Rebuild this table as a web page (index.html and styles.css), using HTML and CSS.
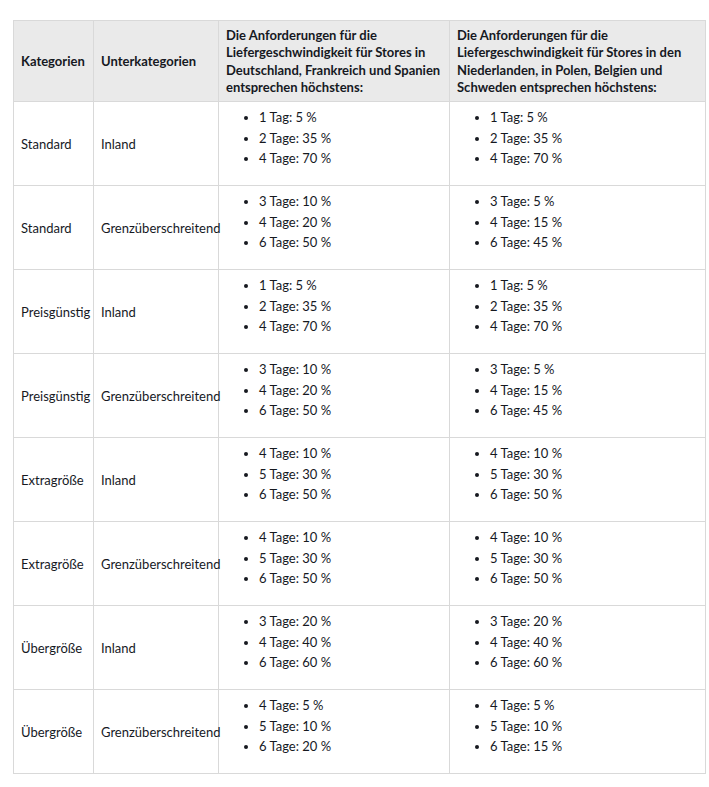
FILE: index.html
```html
<!DOCTYPE html>
<html lang="de">
<head>
<meta charset="utf-8">
<link rel="stylesheet" href="styles.css">
</head>
<body>
<table class="req">
  <colgroup>
    <col class="c1"><col class="c2"><col class="c3"><col class="c4">
  </colgroup>
  <thead>
    <tr>
      <th>Kategorien</th>
      <th>Unterkategorien</th>
      <th>Die Anforderungen für die Liefergeschwindigkeit für Stores in Deutschland, Frankreich und Spanien entsprechen höchstens:</th>
      <th>Die Anforderungen für die Liefergeschwindigkeit für Stores in den Niederlanden, in Polen, Belgien und Schweden entsprechen höchstens:</th>
    </tr>
  </thead>
  <tbody>
    <tr><td>Standard</td><td>Inland</td>
      <td><ul><li>1 Tag: 5 %</li><li>2 Tage: 35 %</li><li>4 Tage: 70 %</li></ul></td>
      <td><ul><li>1 Tag: 5 %</li><li>2 Tage: 35 %</li><li>4 Tage: 70 %</li></ul></td></tr>
    <tr><td>Standard</td><td>Grenzüberschreitend</td>
      <td><ul><li>3 Tage: 10 %</li><li>4 Tage: 20 %</li><li>6 Tage: 50 %</li></ul></td>
      <td><ul><li>3 Tage: 5 %</li><li>4 Tage: 15 %</li><li>6 Tage: 45 %</li></ul></td></tr>
    <tr><td>Preisgünstig</td><td>Inland</td>
      <td><ul><li>1 Tag: 5 %</li><li>2 Tage: 35 %</li><li>4 Tage: 70 %</li></ul></td>
      <td><ul><li>1 Tag: 5 %</li><li>2 Tage: 35 %</li><li>4 Tage: 70 %</li></ul></td></tr>
    <tr><td>Preisgünstig</td><td>Grenzüberschreitend</td>
      <td><ul><li>3 Tage: 10 %</li><li>4 Tage: 20 %</li><li>6 Tage: 50 %</li></ul></td>
      <td><ul><li>3 Tage: 5 %</li><li>4 Tage: 15 %</li><li>6 Tage: 45 %</li></ul></td></tr>
    <tr><td>Extragröße</td><td>Inland</td>
      <td><ul><li>4 Tage: 10 %</li><li>5 Tage: 30 %</li><li>6 Tage: 50 %</li></ul></td>
      <td><ul><li>4 Tage: 10 %</li><li>5 Tage: 30 %</li><li>6 Tage: 50 %</li></ul></td></tr>
    <tr><td>Extragröße</td><td>Grenzüberschreitend</td>
      <td><ul><li>4 Tage: 10 %</li><li>5 Tage: 30 %</li><li>6 Tage: 50 %</li></ul></td>
      <td><ul><li>4 Tage: 10 %</li><li>5 Tage: 30 %</li><li>6 Tage: 50 %</li></ul></td></tr>
    <tr><td>Übergröße</td><td>Inland</td>
      <td><ul><li>3 Tage: 20 %</li><li>4 Tage: 40 %</li><li>6 Tage: 60 %</li></ul></td>
      <td><ul><li>3 Tage: 20 %</li><li>4 Tage: 40 %</li><li>6 Tage: 60 %</li></ul></td></tr>
    <tr><td>Übergröße</td><td>Grenzüberschreitend</td>
      <td><ul><li>4 Tage: 5 %</li><li>5 Tage: 10 %</li><li>6 Tage: 20 %</li></ul></td>
      <td><ul><li>4 Tage: 5 %</li><li>5 Tage: 10 %</li><li>6 Tage: 15 %</li></ul></td></tr>
  </tbody>
</table>
</body>
</html>
```

FILE: styles.css
```css
html, body {
  margin: 0;
  padding: 0;
  background: #ffffff;
}
body {
  padding: 20px 5px 0 13px;
  font-family: "Lato", "Noto Sans", sans-serif;
  font-size: 13px;
  color: #16191f;
}
.req {
  border-collapse: collapse;
  table-layout: fixed;
  width: 692px;
}
.c1 { width: 80px; }
.c2 { width: 125px; }
.c3 { width: 231px; }
.c4 { width: 256px; }
.req th, .req td {
  border: 1px solid #d9d9d9;
  text-align: left;
  vertical-align: middle;
}
.req th {
  background: #eaeaea;
  font-weight: 700;
  line-height: 17.3px;
  padding: 6px 7px 5px;
}
.req td {
  padding: 5px 7px 4px;
  line-height: 20.5px;
}
.req ul {
  margin: 0 0 12.5px 0;
  padding-left: 33px;
}
.req li {
  line-height: 20.5px;
}
```
